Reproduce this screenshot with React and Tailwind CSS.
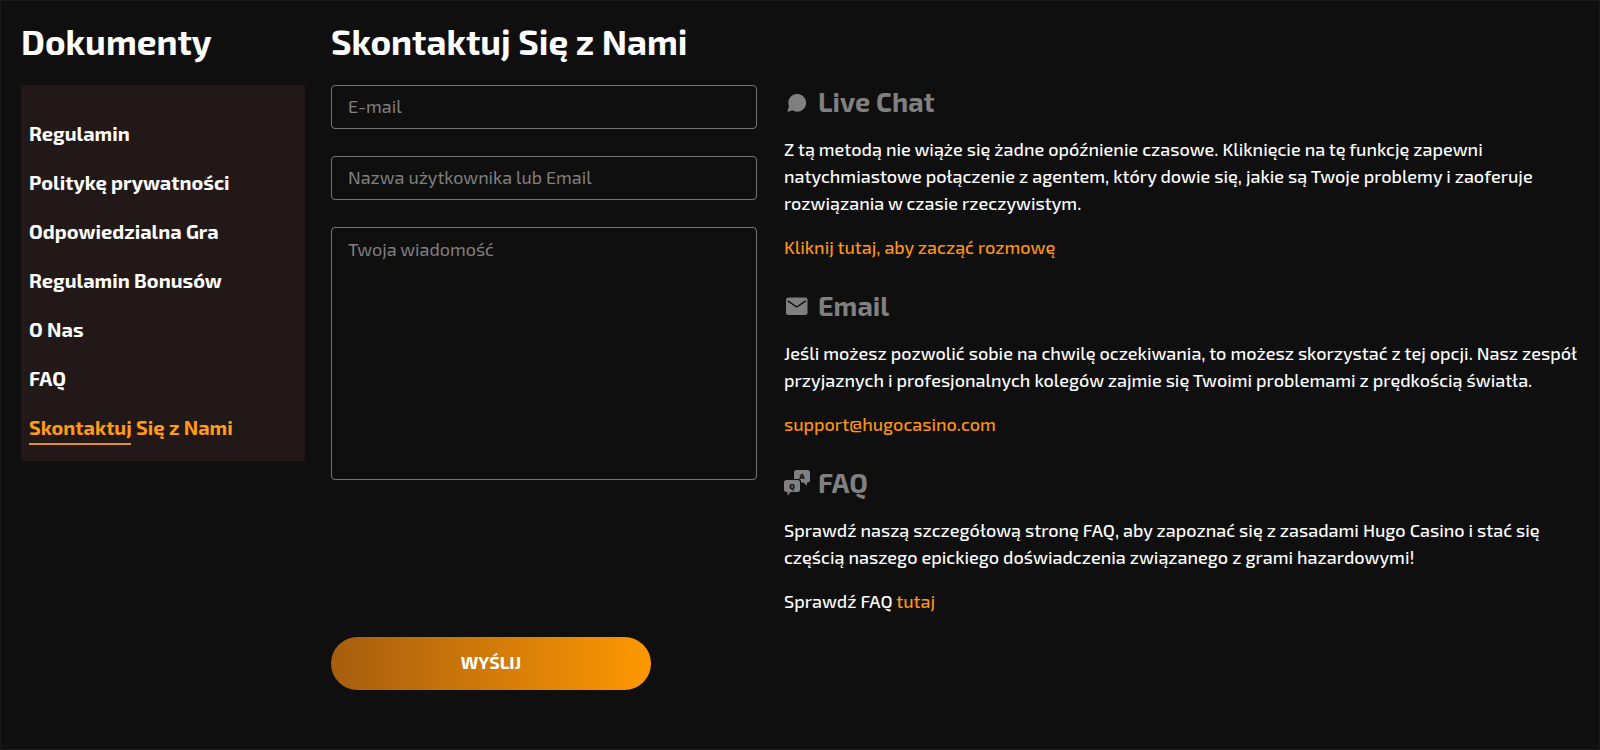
import { useState } from "react";

const documents = [
  "Regulamin",
  "Politykę prywatności",
  "Odpowiedzialna Gra",
  "Regulamin Bonusów",
  "O Nas",
  "FAQ",
  "Skontaktuj Się z Nami",
];

function ChatIcon() {
  return (
    <svg className="mt-0.5 w-[26px] h-[26px] shrink-0" viewBox="0 0 26 26" fill="currentColor" aria-hidden="true">
      <path d="M13.500 5a8.800 8.800 0 1 1-4 16.700c-.4-.2-.9-.2-1.300-.1L4.100 22.800c-.4.1-.7-.3-.6-.7l1.300-4.200c.1-.4.1-.8 0-1.200A8.800 8.800 0 0 1 13.500 5z" />
    </svg>
  );
}

function MailIcon() {
  return (
    <svg className="mt-0.5 w-[26px] h-[26px] shrink-0" viewBox="0 0 26 26" aria-hidden="true">
      <rect x="2" y="4.500" width="21.500" height="17.500" rx="2.500" fill="currentColor" />
      <path d="M4.200 8.200l8.600 5.800 8.600-5.800" fill="none" stroke="#0f0f0f" strokeWidth="1.500" strokeLinecap="round" strokeLinejoin="round" />
    </svg>
  );
}

function FaqIcon() {
  return (
    <svg className="mt-0.5 w-[26px] h-[26px] shrink-0" viewBox="0 0 26 26" aria-hidden="true">
      <path fill="currentColor" d="M12.500 0h11a2.500 2.500 0 0 1 2.500 2.500v7.500a2.500 2.500 0 0 1-2.500 2.500H23v3.300l-3.600-3.300H17V11.500a2.500 2.500 0 0 0-2.500-2.500H10V2.500A2.500 2.500 0 0 1 12.500 0z" />
      <path fill="currentColor" d="M2.500 10h11a2.500 2.500 0 0 1 2.500 2.500v7a2.500 2.500 0 0 1-2.500 2.500H6.800L3.500 25.800V22h-1A2.500 2.500 0 0 1 0 19.500v-7A2.500 2.500 0 0 1 2.500 10z" />
      <text x="18" y="9" textAnchor="middle" fontSize="8" fontWeight="800" fill="#0f0f0f">A</text>
      <text x="8" y="18.500" textAnchor="middle" fontSize="8" fontWeight="800" fill="#0f0f0f">Q</text>
    </svg>
  );
}

function InfoBlock({ icon, title, children }) {
  return (
    <section>
      <h2 className="flex items-center gap-2 text-[27px] leading-8 font-bold text-[#808080]">
        {icon}
        {title}
      </h2>
      <div className="mt-[19px] space-y-[17px] text-lg leading-[27px] font-medium text-white">{children}</div>
    </section>
  );
}

const fieldClass =
  "block w-full rounded border border-[#757575] bg-transparent px-4 text-lg text-white placeholder:text-[#808080] outline-none focus:border-[#ff9800]";

export default function App() {
  const [active, setActive] = useState("Skontaktuj Się z Nami");

  return (
    <div className="min-h-screen border border-[#1b1b1b] bg-[#0f0f0f] px-5 pt-4 font-['Exo_2','Roboto',sans-serif]">
      <div className="flex items-start">
        <aside className="w-[284px] shrink-0">
          <h2 className="text-[35px] leading-[48px] font-bold text-white">Dokumenty</h2>
          <nav className="mt-5 bg-[#231818] px-2 pt-[34px] pb-5">
            <ul className="space-y-[21px]">
              {documents.map((name) => (
                <li key={name} className="text-xl leading-7 font-bold">
                  <a
                    href="#"
                    onClick={() => setActive(name)}
                    className={
                      name === active
                        ? "relative inline-block text-[#ff9b17] after:absolute after:-bottom-1 after:left-0 after:h-0.5 after:w-1/2 after:bg-[#e0912b]"
                        : "text-white hover:text-[#ff9b17]"
                    }
                  >
                    {name}
                  </a>
                </li>
              ))}
            </ul>
          </nav>
        </aside>

        <main className="ml-[26px] min-w-0 flex-1">
          <h1 className="text-[35px] leading-[48px] font-bold text-white">Skontaktuj Się z Nami</h1>
          <div className="mt-5 flex items-start gap-[27px]">
            <form className="w-[426px] shrink-0" onSubmit={(e) => e.preventDefault()}>
              <input type="email" aria-label="E-mail" placeholder="E-mail" className={`${fieldClass} h-11 pb-0.5`} />
              <input
                type="text"
                aria-label="Nazwa użytkownika lub Email"
                placeholder="Nazwa użytkownika lub Email"
                className={`${fieldClass} mt-[27px] h-11 pb-0.5`}
              />
              <textarea
                aria-label="Twoja wiadomość"
                placeholder="Twoja wiadomość"
                className={`${fieldClass} mt-[27px] h-[253px] resize-none py-[7px]`}
              />
              <button
                type="submit"
                className="mt-[157px] h-[53px] w-80 rounded-full bg-linear-to-r from-[#a65e0d] to-[#ff9800] pb-1 text-lg font-bold text-white uppercase"
              >
                Wyślij
              </button>
            </form>

            <div className="min-w-0 flex-1 space-y-7">
              <InfoBlock icon={<ChatIcon />} title="Live Chat">
                <p>
                  Z tą metodą nie wiąże się żadne opóźnienie czasowe. Kliknięcie na tę funkcję zapewni natychmiastowe
                  połączenie z agentem, który dowie się, jakie są Twoje problemy i zaoferuje rozwiązania w czasie
                  rzeczywistym.
                </p>
                <p>
                  <a href="#" className="text-[#ff9416]">Kliknij tutaj, aby zacząć rozmowę</a>
                </p>
              </InfoBlock>
              <InfoBlock icon={<MailIcon />} title="Email">
                <p>
                  Jeśli możesz pozwolić sobie na chwilę oczekiwania, to możesz skorzystać z tej opcji. Nasz zespół
                  przyjaznych i profesjonalnych kolegów zajmie się Twoimi problemami z prędkością światła.
                </p>
                <p>
                  <a href="mailto:support@hugocasino.com" className="text-[#ff9416]">support@hugocasino.com</a>
                </p>
              </InfoBlock>
              <InfoBlock icon={<FaqIcon />} title="FAQ">
                <p>
                  Sprawdź naszą szczegółową stronę FAQ, aby zapoznać się z zasadami Hugo Casino i stać się częścią
                  naszego epickiego doświadczenia związanego z grami hazardowymi!
                </p>
                <p>
                  Sprawdź FAQ <a href="#" className="text-[#ff9416]">tutaj</a>
                </p>
              </InfoBlock>
            </div>
          </div>
        </main>
      </div>
    </div>
  );
}
